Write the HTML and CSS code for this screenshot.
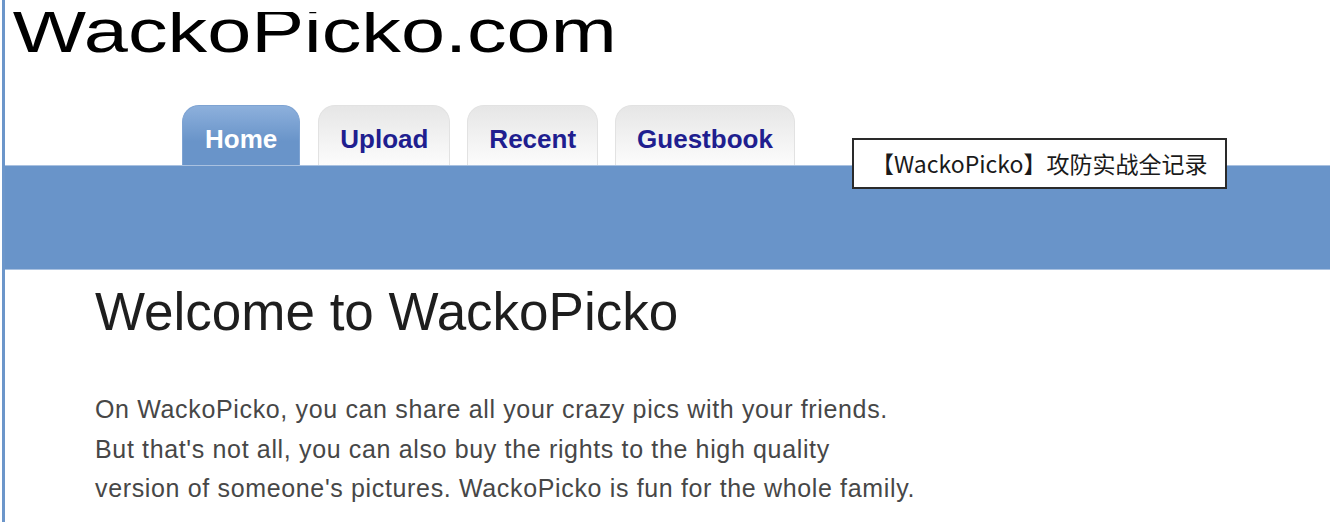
FILE: index.html
```html
<!DOCTYPE html>
<html lang="en">
<head>
<meta charset="utf-8">
<title>WackoPicko.com</title>
<link rel="stylesheet" href="styles.css">
</head>
<body>
<div class="page">
  <header class="header">
    <div class="logo-wrap">
      <h1 class="logo">WackoPicko.com</h1>
    </div>
    <nav class="tabs">
      <a class="tab tab-active" href="#">Home</a>
      <a class="tab" href="#">Upload</a>
      <a class="tab" href="#">Recent</a>
      <a class="tab" href="#">Guestbook</a>
    </nav>
  </header>
  <div class="band"></div>
  <main class="content">
    <h2 class="title">Welcome to WackoPicko</h2>
    <p class="intro">On WackoPicko, you can share all your crazy pics with your friends.<br>But that's not all, you can also buy the rights to the high quality<br>version of someone's pictures. WackoPicko is fun for the whole family.</p>
  </main>
  <div class="caption">【WackoPicko】攻防实战全记录</div>
</div>
</body>
</html>
```

FILE: styles.css
```css
* { box-sizing: border-box; }
html, body { margin: 0; padding: 0; background: #fff; }
body {
  font-family: "Liberation Sans", Arial, sans-serif;
  overflow: hidden;
  height: 522px;
}
.page {
  position: relative;
  margin-left: 2px;
  border-left: 3px solid #6c96ca;
  height: 522px;
  padding-top: 0.1px;
  overflow: hidden;
}
.logo-wrap {
  margin-top: 12px;
  height: 50px;
  overflow: hidden;
}
.logo {
  width: max-content;
  margin: -12px 0 0 7px;
  font-size: 62px;
  line-height: 62px;
  height: 62px;
  font-weight: normal;
  color: #000;
  white-space: nowrap;
  transform: scaleX(1.278);
  transform-origin: left top;
}
.tabs {
  display: flex;
  align-items: flex-end;
  margin-top: 43px;
  padding-left: 177px;
}
.tab {
  display: block;
  height: 60px;
  margin-right: 17px;
  padding: 20px 21px 0;
  font-size: 26px;
  line-height: 26px;
  font-weight: bold;
  color: #201e8f;
  text-decoration: none;
  border: 1px solid #e2e2e2;
  border-bottom: none;
  border-radius: 17px 17px 0 0;
  background: linear-gradient(#e6e6e6, #fcfcfc);
}
.tab-active {
  color: #fff;
  border-color: #7ea3d2;
  background: linear-gradient(#8db0dc, #6994c9 60%);
  padding: 20px 22px 0;
  margin-right: 18px;
}
.band {
  height: 105px;
  background: #6994c9;
  border-top: 1px solid #a9c1e0;
  border-bottom: 1px solid #a9c1e0;
}
.content {
  padding-left: 90px;
}
.title {
  margin: 15px 0 0;
  font-size: 53px;
  line-height: 1;
  font-weight: normal;
  color: #1e1e1e;
}
.intro {
  margin: 52px 0 0;
  font-size: 25px;
  line-height: 39.5px;
  letter-spacing: 0.65px;
  color: #474747;
}
.caption {
  position: absolute;
  left: 847px;
  top: 138px;
  width: 375px;
  height: 51px;
  padding-left: 17px;
  border: 2px solid #2a2a2a;
  background: #fff;
  font-family: "Noto Sans CJK SC", "Noto Sans", sans-serif;
  font-size: 23px;
  line-height: 47px;
  color: #1a1a1a;
  white-space: nowrap;
}
```
